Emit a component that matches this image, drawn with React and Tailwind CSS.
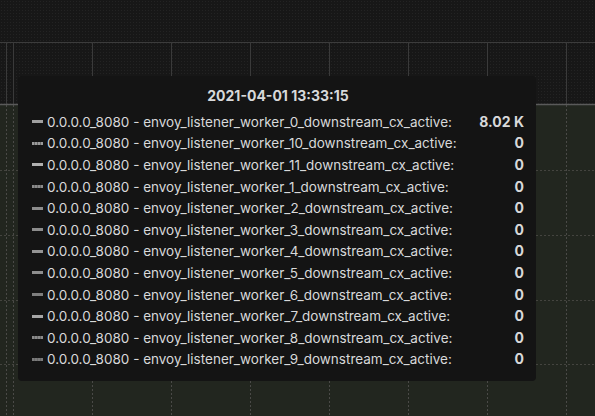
import React from "react";

const rows = [
  { name: "0.0.0.0_8080 - envoy_listener_worker_0_downstream_cx_active:", value: "8.02 K", color: "#a0a0a0", dashed: false },
  { name: "0.0.0.0_8080 - envoy_listener_worker_10_downstream_cx_active:", value: "0", color: "#9a9a9a", dashed: true },
  { name: "0.0.0.0_8080 - envoy_listener_worker_11_downstream_cx_active:", value: "0", color: "#b0b0b0", dashed: false },
  { name: "0.0.0.0_8080 - envoy_listener_worker_1_downstream_cx_active:", value: "0", color: "#8a8a8a", dashed: true },
  { name: "0.0.0.0_8080 - envoy_listener_worker_2_downstream_cx_active:", value: "0", color: "#8c8c8c", dashed: false },
  { name: "0.0.0.0_8080 - envoy_listener_worker_3_downstream_cx_active:", value: "0", color: "#8c8c8c", dashed: false },
  { name: "0.0.0.0_8080 - envoy_listener_worker_4_downstream_cx_active:", value: "0", color: "#949494", dashed: false },
  { name: "0.0.0.0_8080 - envoy_listener_worker_5_downstream_cx_active:", value: "0", color: "#8e8e8e", dashed: false },
  { name: "0.0.0.0_8080 - envoy_listener_worker_6_downstream_cx_active:", value: "0", color: "#7e7e7e", dashed: false },
  { name: "0.0.0.0_8080 - envoy_listener_worker_7_downstream_cx_active:", value: "0", color: "#a6a6a6", dashed: false },
  { name: "0.0.0.0_8080 - envoy_listener_worker_8_downstream_cx_active:", value: "0", color: "#8a8a8a", dashed: true },
  { name: "0.0.0.0_8080 - envoy_listener_worker_9_downstream_cx_active:", value: "0", color: "#7a7a7a", dashed: true },
];

function ChartBg() {
  const vx = [6.5, 13.5, 92.5, 171.5, 250.5, 329.5, 408.5, 487.5, 566.5];
  const hy = [170.5, 235.5, 300.5, 364.5];
  return (
    <svg width="595" height="416" viewBox="0 0 595 416" className="block">
      <defs>
        <pattern id="dots" width="3" height="3" patternUnits="userSpaceOnUse">
          <rect x="1" y="1" width="1" height="1" fill="#232323" />
        </pattern>
      </defs>
      <rect width="595" height="416" fill="#171717" />
      <rect width="595" height="104" fill="url(#dots)" />
      <rect y="104" width="595" height="312" fill="#22261f" />
      <line x1="0" y1="42.5" x2="595" y2="42.5" stroke="#3c3c3c" strokeWidth="1" />
      {vx.map((x, i) => (
        <line key={i} x1={x} y1="42" x2={x} y2="104" stroke="#3a3a3a" strokeWidth="1" />
      ))}
      {vx.map((x, i) => (
        <line key={"b" + i} x1={x} y1="105" x2={x} y2="416" stroke="#4a4a47" strokeWidth="1" strokeDasharray="2 2" />
      ))}
      {hy.map((y, i) => (
        <line key={i} x1="0" y1={y} x2="595" y2={y} stroke="#44443f" strokeWidth="1" strokeDasharray="2 2" />
      ))}
      <line x1="0" y1="104.5" x2="595" y2="104.5" stroke="#5a5a5a" strokeWidth="1.5" />
    </svg>
  );
}

export default function App() {
  return (
    <div
      className="relative w-[595px] h-[416px] overflow-hidden bg-[#171717]"
      style={{ fontFamily: "Inter, Roboto, 'Liberation Sans', sans-serif" }}
    >
      <ChartBg />
      <div className="absolute left-[18px] top-[76px] w-[518px] h-[305px] rounded-[4px] bg-[#141414] pl-[14px] pr-[12px] pt-[10px]">
        <div className="text-center text-[14px] font-bold leading-[19px] text-[#d8d9da]">
          2021-04-01 13:33:15
        </div>
        <div className="mt-[6px] flex flex-col">
          {rows.map((r, i) => (
            <div key={i} className="flex h-[21.6px] items-center">
              <span
                className="mr-[4px] inline-block h-[3px] w-[11px]"
                style={{
                  background: r.dashed
                    ? `repeating-linear-gradient(90deg, ${r.color} 0 2px, #6a6a6a 2px 3px)`
                    : r.color,
                }}
              />
              <span className="flex-1 text-[13.5px] leading-[16px] text-[#d8d9da]">{r.name}</span>
              <span className="text-[14px] font-bold leading-[16px] text-[#d8d9da]">{r.value}</span>
            </div>
          ))}
        </div>
      </div>
    </div>
  );
}
